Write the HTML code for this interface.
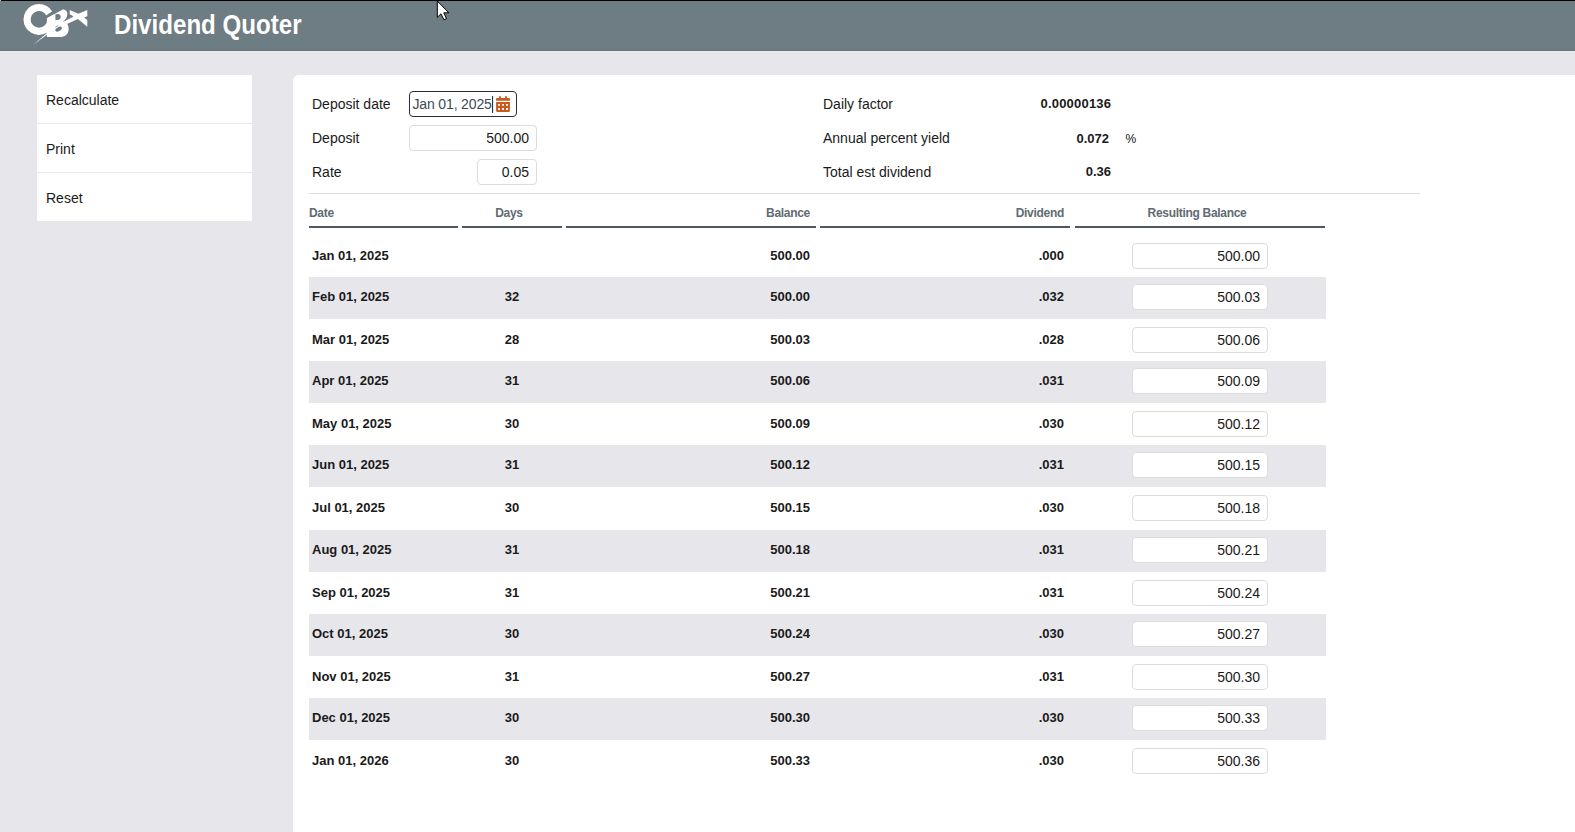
<!DOCTYPE html>
<html><head><meta charset="utf-8">
<style>
*{box-sizing:border-box;margin:0;padding:0}
html,body{width:1575px;height:832px;overflow:hidden;background:#e7e6eb;font-family:"Liberation Sans",sans-serif;color:#1a1a1a}
#topline{position:absolute;left:0;top:0;width:1575px;height:1px;background:#000}
#hdr{position:absolute;left:0;top:1px;width:1575px;height:50px;background:#6e7c83;border-bottom:1px solid #65727a}
#hdrl{position:absolute;left:0;top:51px;width:1575px;height:1px;background:#eeedf1}
#title{position:absolute;left:114.3px;top:8px;font-size:27.5px;font-weight:bold;color:#fff;transform:scaleX(0.877);transform-origin:0 0;white-space:nowrap}
#logo{position:absolute;left:20px;top:2px}
#cursor{position:absolute;left:436px;top:0px}
#side{position:absolute;left:37px;top:75px;width:215px;background:#fff}
#side div{height:49px;border-bottom:1px solid #e7e6eb;font-size:14px;padding-left:9px;line-height:51px}
#side div:last-child{border-bottom:none;height:48px}
#main{position:absolute;left:293px;top:75px;width:1282px;height:757px;background:#fff;border-top-left-radius:6px}
.lbl{position:absolute;font-size:14px;color:#1a1a1a}
.inp{position:absolute;height:26px;border:1px solid #dcdcdc;border-radius:4px;background:#fff;font-size:14px;text-align:right;padding-right:7px;line-height:24px;color:#1a1a1a}
.val{position:absolute;font-size:13px;font-weight:bold;text-align:right}
#sep{position:absolute;left:309px;top:193px;width:1111px;height:1px;background:#dedede}
.th{position:absolute;top:205px;height:23px;padding-top:1px;letter-spacing:-0.3px;border-bottom:2.5px solid #4f5a60;font-size:12px;font-weight:bold;color:#5f6b72}
.row{position:absolute;left:309px;width:1017px;height:42.08px}
.row.g{background:#e7e6eb}
.row.g .c{top:12px}
.row.g .rb{top:7px}
.c{position:absolute;font-size:13px;font-weight:bold;top:13px}
.rb{position:absolute;left:823px;top:8px;width:136px;height:26px;border:1px solid #dcdcdc;border-radius:4px;background:#fff;font-size:14px;text-align:right;padding-right:7px;line-height:24px}
</style></head><body>
<div id="topline"></div>
<div id="hdrl"></div>
<div style="position:absolute;left:0;top:1px;width:1575px;height:1px;background:#75838a"></div>
<div style="position:absolute;left:0;top:0;width:1px;height:1px;background:#c8c8c8"></div>
<div id="hdr">
  
  <svg id="logo" width="100" height="50" viewBox="0 0 100 50" style="position:absolute;left:0;top:-1px">
  <path fill="#fff" fill-rule="evenodd" d="M39 3.9 A15.5 15.5 0 1 1 38.99 3.9 Z M39 11.1 A8.3 8.3 0 1 0 39.01 11.1 Z"/>
  <path fill="#6e7c83" d="M43.5 17.3 L55.5 9.1 L58 2 L70 2 L62.8 9.5 L46.9 18.3 L43.5 20.2 Z"/>
  <path fill="#fff" fill-rule="evenodd" d="M46.9 18.3 L62.8 9.5 C65.8 9.3 67.6 11.8 67.3 14.5 C67.1 16.8 66.2 18.8 64.5 20.3 L66.9 23.6 C68.5 25.5 68.9 28.5 68.5 30.5 C68 34.5 64.5 37 60.3 37 L46.9 37 Z
   M55.4 14.6 L57.5 14 C59.5 13.8 60.8 15.2 60.7 17 C60.6 18.8 59.3 19.9 57.5 19.9 L55.4 19.9 Z"/>
  <ellipse cx="58.6" cy="29.1" rx="3.6" ry="2.0" transform="rotate(-32 58.6 29.1)" fill="#6e7c83"/>
  <path fill="none" stroke="#6e7c83" stroke-width="0.7" d="M55.2 27.4 L58.4 25.4"/>
  <path fill="#fff" d="M63.2 21.5 L73.4 16.2 L69.7 14.2 L69.7 9.9 L78.3 13.8 L87.3 9.9 L87.3 16.2 L84 17.4 L87.3 19.9 L87.3 26.8 L77.9 19.1 L66.9 24 Z"/>
  <path fill="none" stroke="#6e7c83" stroke-width="0.8" d="M63.4 21.3 L73.2 16.4"/>
  <path fill="#fff" d="M33 45 L47 33.1 L47.2 34.6 Z"/>
</svg>
  <div id="title">Dividend Quoter</div>
</div>
<svg id="cursor" width="16" height="24" viewBox="0 0 16 24"><path d="M1.3 1 L1.3 17.4 L5 13.8 L7.9 19.8 L10.5 18.7 L7.8 12.8 L12.9 12.8 Z" fill="#fff" stroke="#000" stroke-width="1" stroke-linejoin="miter"/></svg>

<div id="side"><div>Recalculate</div><div>Print</div><div>Reset</div></div>

<div id="main"></div>

<div class="lbl" style="left:312px;top:96px">Deposit date</div>
<div class="inp" style="left:409px;top:91px;width:108px;border:1.5px solid #2b2b42;text-align:left;padding-left:2.5px;letter-spacing:-0.15px;color:#3c4a55">Jan 01, 2025</div>
<svg style="position:absolute;left:488px;top:90px" width="30" height="28" viewBox="488 90 30 28">
<rect x="492" y="95.9" width="1.1" height="17" fill="#27323c"/>
<rect x="499.1" y="96.1" width="1.7" height="3" fill="#c75a1c"/>
<rect x="505.2" y="96.1" width="1.7" height="3" fill="#c75a1c"/>
<path d="M496.1 100.8 L496.1 99 Q496.1 97.9 497.2 97.9 L508.8 97.9 Q509.9 97.9 509.9 99 L509.9 100.8 Z" fill="#c75a1c"/>
<path fill="#c75a1c" fill-rule="evenodd" d="M496.1 102.1 L509.9 102.1 L509.9 110.4 Q509.9 111.9 508.4 111.9 L497.6 111.9 Q496.1 111.9 496.1 110.4 Z
 M498.1 104 h1.9 v1.8 h-1.9 Z M502.1 104 h1.9 v1.8 h-1.9 Z M506 104 h2 v1.8 h-2 Z
 M498.1 108 h1.9 v1.9 h-1.9 Z M502.1 108 h1.9 v1.9 h-1.9 Z M506 108 h2 v1.9 h-2 Z"/>
</svg>
<div class="lbl" style="left:312px;top:130px">Deposit</div>
<div class="inp" style="left:409px;top:125px;width:128px">500.00</div>
<div class="lbl" style="left:312px;top:164px">Rate</div>
<div class="inp" style="left:477px;top:159px;width:60px">0.05</div>

<div class="lbl" style="left:823px;top:96px">Daily factor</div>
<div class="val" style="left:990px;width:121.2px;top:96px;letter-spacing:0.2px">0.00000136</div>
<div class="lbl" style="left:823px;top:130px">Annual percent yield</div>
<div class="val" style="left:990px;width:119px;top:131px">0.072</div>
<div class="lbl" style="left:1125.5px;top:132px;font-size:12px;color:#111">%</div>
<div class="lbl" style="left:823px;top:164px">Total est dividend</div>
<div class="val" style="left:990px;width:121px;top:164px">0.36</div>

<div id="sep"></div>

<div class="th" style="left:309px;width:149px">Date</div>
<div class="th" style="left:462px;width:100px;text-align:center;padding-right:6px">Days</div>
<div class="th" style="left:566px;width:250px;text-align:right;padding-right:6px">Balance</div>
<div class="th" style="left:820px;width:250px;text-align:right;padding-right:6px">Dividend</div>
<div class="th" style="left:1075px;width:250px;text-align:center;padding-right:6px">Resulting Balance</div>

<div class="row" style="top:235.00px"><div class="c" style="left:3px">Jan 01, 2025</div><div class="c" style="left:153px;width:100px;text-align:center"></div><div class="c" style="left:257px;width:244px;text-align:right">500.00</div><div class="c" style="left:511px;width:244px;text-align:right">.000</div><div class="rb">500.00</div></div>
<div class="row g" style="top:277.08px"><div class="c" style="left:3px">Feb 01, 2025</div><div class="c" style="left:153px;width:100px;text-align:center">32</div><div class="c" style="left:257px;width:244px;text-align:right">500.00</div><div class="c" style="left:511px;width:244px;text-align:right">.032</div><div class="rb">500.03</div></div>
<div class="row" style="top:319.16px"><div class="c" style="left:3px">Mar 01, 2025</div><div class="c" style="left:153px;width:100px;text-align:center">28</div><div class="c" style="left:257px;width:244px;text-align:right">500.03</div><div class="c" style="left:511px;width:244px;text-align:right">.028</div><div class="rb">500.06</div></div>
<div class="row g" style="top:361.24px"><div class="c" style="left:3px">Apr 01, 2025</div><div class="c" style="left:153px;width:100px;text-align:center">31</div><div class="c" style="left:257px;width:244px;text-align:right">500.06</div><div class="c" style="left:511px;width:244px;text-align:right">.031</div><div class="rb">500.09</div></div>
<div class="row" style="top:403.32px"><div class="c" style="left:3px">May 01, 2025</div><div class="c" style="left:153px;width:100px;text-align:center">30</div><div class="c" style="left:257px;width:244px;text-align:right">500.09</div><div class="c" style="left:511px;width:244px;text-align:right">.030</div><div class="rb">500.12</div></div>
<div class="row g" style="top:445.40px"><div class="c" style="left:3px">Jun 01, 2025</div><div class="c" style="left:153px;width:100px;text-align:center">31</div><div class="c" style="left:257px;width:244px;text-align:right">500.12</div><div class="c" style="left:511px;width:244px;text-align:right">.031</div><div class="rb">500.15</div></div>
<div class="row" style="top:487.48px"><div class="c" style="left:3px">Jul 01, 2025</div><div class="c" style="left:153px;width:100px;text-align:center">30</div><div class="c" style="left:257px;width:244px;text-align:right">500.15</div><div class="c" style="left:511px;width:244px;text-align:right">.030</div><div class="rb">500.18</div></div>
<div class="row g" style="top:529.56px"><div class="c" style="left:3px">Aug 01, 2025</div><div class="c" style="left:153px;width:100px;text-align:center">31</div><div class="c" style="left:257px;width:244px;text-align:right">500.18</div><div class="c" style="left:511px;width:244px;text-align:right">.031</div><div class="rb">500.21</div></div>
<div class="row" style="top:571.64px"><div class="c" style="left:3px">Sep 01, 2025</div><div class="c" style="left:153px;width:100px;text-align:center">31</div><div class="c" style="left:257px;width:244px;text-align:right">500.21</div><div class="c" style="left:511px;width:244px;text-align:right">.031</div><div class="rb">500.24</div></div>
<div class="row g" style="top:613.72px"><div class="c" style="left:3px">Oct 01, 2025</div><div class="c" style="left:153px;width:100px;text-align:center">30</div><div class="c" style="left:257px;width:244px;text-align:right">500.24</div><div class="c" style="left:511px;width:244px;text-align:right">.030</div><div class="rb">500.27</div></div>
<div class="row" style="top:655.80px"><div class="c" style="left:3px">Nov 01, 2025</div><div class="c" style="left:153px;width:100px;text-align:center">31</div><div class="c" style="left:257px;width:244px;text-align:right">500.27</div><div class="c" style="left:511px;width:244px;text-align:right">.031</div><div class="rb">500.30</div></div>
<div class="row g" style="top:697.88px"><div class="c" style="left:3px">Dec 01, 2025</div><div class="c" style="left:153px;width:100px;text-align:center">30</div><div class="c" style="left:257px;width:244px;text-align:right">500.30</div><div class="c" style="left:511px;width:244px;text-align:right">.030</div><div class="rb">500.33</div></div>
<div class="row" style="top:739.96px"><div class="c" style="left:3px">Jan 01, 2026</div><div class="c" style="left:153px;width:100px;text-align:center">30</div><div class="c" style="left:257px;width:244px;text-align:right">500.33</div><div class="c" style="left:511px;width:244px;text-align:right">.030</div><div class="rb">500.36</div></div>
</body></html>
